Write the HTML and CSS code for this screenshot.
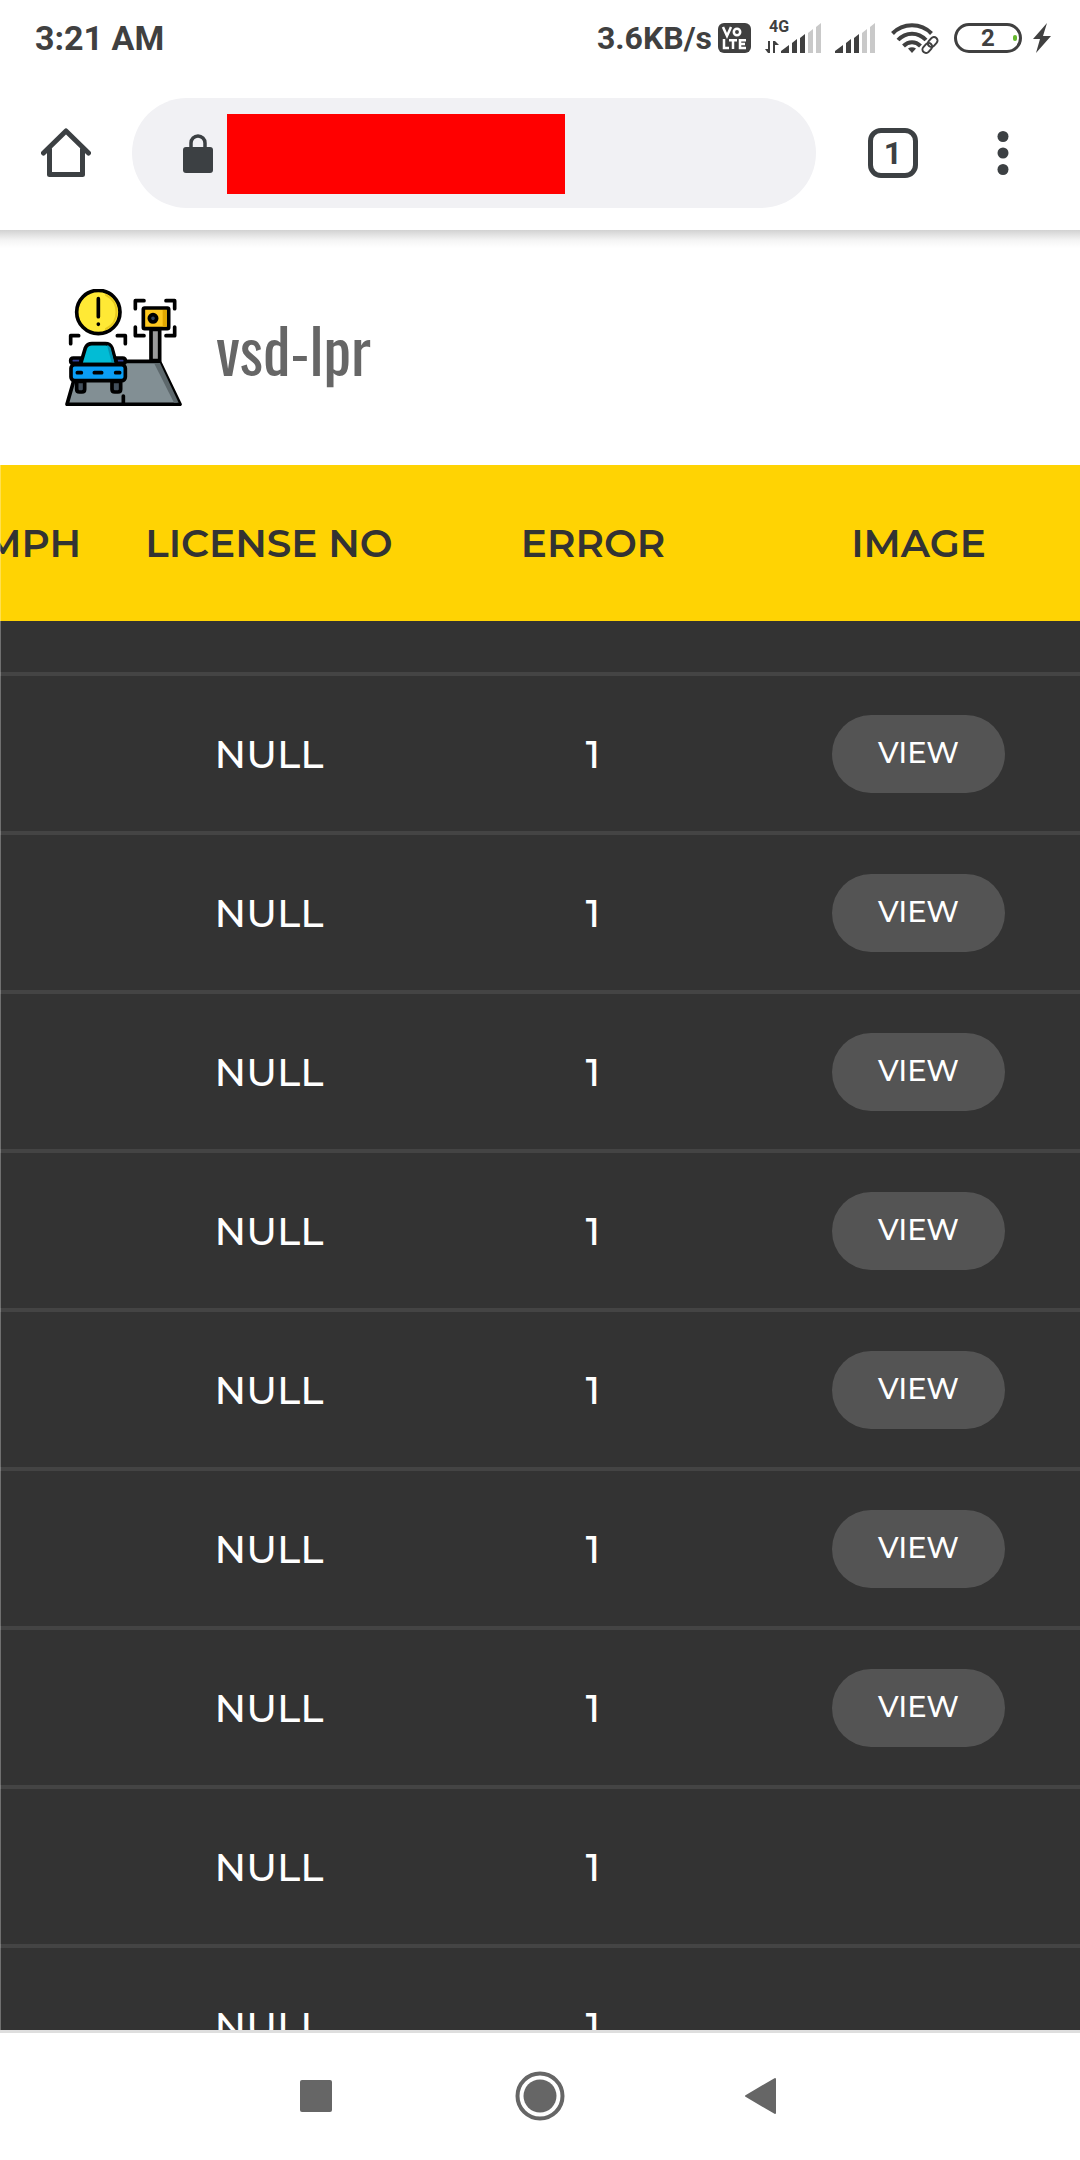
FILE: index.html
```html
<!DOCTYPE html>
<html lang="en">
<head>
<meta charset="utf-8">
<meta name="viewport" content="width=device-width, initial-scale=1">
<title>vsd-lpr</title>
<link rel="stylesheet" href="styles.css">
</head>
<body>
<div class="status">
  <span class="status-time">3:21 AM</span>
  <div class="status-side">
    <span class="status-speed">3.6KB/s</span>
    <svg class="icon-volte" width="33" height="30" viewBox="0 0 33 30" fill="none" stroke="#fff" stroke-width="2.5">
      <rect width="33" height="30" rx="6" fill="#404040" stroke="none"/>
      <path d="M5 4l4 9 4-9"/><circle cx="19" cy="9" r="3.2"/>
      <path d="M6 16v9h5M11 17.200h8M15 17v9M28 17.200h-6v7.800h6M22 21h5"/>
    </svg>
    <svg class="icon-signal" width="57" height="46" viewBox="0 -6 57 46" fill="#404040">
      <text class="network" x="4" y="11">4G</text>
      <path d="M3 20h2v12H3zM0 28h3v4zM8 20h2v12H8zM10 20l4 4h-4z"/>
      <path d="M16 32v-2l8-6v8zM27 32V22l5-4v14zM35 32V17l5-4v19z"/>
      <path fill="#c9c9c9" d="M43 32V12l5-4v24zM51 32V6l5-4v30z"/>
    </svg>
    <svg class="icon-signal2" width="42" height="34" viewBox="0 0 42 34" fill="#404040">
      <path d="M0 32v-2l8-6v8zM11 32V22l5-4v14zM19 32V17l5-4v19z"/>
      <path fill="#c9c9c9" d="M27 32V12l5-4v24zM35 32V6l5-4v30z"/>
    </svg>
    <svg class="icon-wifi" width="48" height="32" viewBox="0 0 48 32" fill="none" stroke="#404040">
      <path stroke-width="4" d="M1.500 11.500C12 .5 30 .5 40.500 11.500M7 18c8-8.500 20-8.500 28 0M12.500 24c5-5 12-5 17 0"/>
      <path fill="#404040" stroke="none" d="M17 26.500q4-2.500 8 0l-4 4.500z"/>
      <g transform="rotate(-48 39 23)" stroke-width="2"><rect x="29.500" y="19.500" width="11" height="7" rx="3.500"/><rect x="37.500" y="19.500" width="11" height="7" rx="3.500"/></g>
    </svg>
    <svg class="icon-battery" width="68" height="30" viewBox="0 0 68 30">
      <rect x="1.500" y="1.500" width="65" height="27" rx="13.500" fill="none" stroke="#404040" stroke-width="3"/>
      <text class="charge" x="34" y="23" text-anchor="middle">2</text>
      <rect x="59" y="12" width="4" height="6" rx="2" fill="#66b82e"/>
    </svg>
    <svg class="icon-bolt" width="20" height="30" viewBox="0 0 20 30" fill="#404040"><path d="M15 0L1 16h7L4 30l15-17h-8z"/></svg>
  </div>
</div>

<div class="toolbar">
  <button class="tool" type="button" aria-label="Home">
    <svg width="50" height="50" viewBox="0 0 50 50" fill="none" stroke="#3c4043" stroke-width="5" stroke-linecap="round" stroke-linejoin="round"><path d="M2.500 25L25 3l22.500 22M8.500 21v25.500h33V21"/></svg>
  </button>
  <div class="address">
    <svg width="30" height="40" viewBox="0 0 30 40"><rect y="13" width="30" height="26" rx="3" fill="#3c4043"/><path d="M8 15V9a7 7 0 0 1 14 0v6" fill="none" stroke="#3c4043" stroke-width="3.500"/></svg>
    <input class="url" type="text" aria-label="Address" readonly>
  </div>
  <button class="tool tabs" type="button" aria-label="Open tabs"><span class="tab-count">1</span></button>
  <button class="tool menu" type="button" aria-label="Menu">
    <svg width="12" height="46" viewBox="0 0 12 46" fill="#3c4043"><circle cx="6" cy="6.500" r="5.500"/><circle cx="6" cy="23" r="5.500"/><circle cx="6" cy="39.500" r="5.500"/></svg>
  </button>
</div>

<header class="site">
  <svg class="logo" width="117" height="117" viewBox="45 57 351 351" stroke="#000" stroke-width="11" stroke-linejoin="round" stroke-linecap="round">
    <path fill="#828f94" d="M88 274h240l62 129H51z"/>
    <path fill="#5d686c" stroke="none" d="M312 279h18l56 119h-14z"/>
    <path fill="none" d="M220 403v-25"/>
    <path fill="#9a9a9a" d="M303 178h26v94h-26z"/>
    <rect x="280" y="114" width="76" height="62" rx="4" fill="#ffc91f"/>
    <path d="M338 120h12v50h-12z" fill="#e3a800" stroke="none"/>
    <circle cx="309" cy="145" r="11" fill="#35455a"/>
    <path fill="none" d="M282 92h-26v24M348 92h26v24M282 197h-26v-26M348 197h26v-26M86 197H62v24M202 197h24v24"/>
    <circle cx="145" cy="126" r="65" fill="#ffe935"/>
    <path fill="none" stroke="#e8c81e" stroke-width="6" d="M168 75a57 57 0 0 1 0 102"/>
    <path fill="none" d="M145 86v54M145 162v1"/>
    <path fill="#43505c" d="M80 334h24v24q0 8-8 8h-8q-8 0-8-8zM186 334h26v24q0 8-8 8h-10q-8 0-8-8z"/>
    <path fill="#33429b" d="M92 280H70q-8 0-8-8t8-8h24zM200 280h18q8 0 8-8t-8-8h-22z"/>
    <path fill="#02bcd5" d="M91 284l15-50q6-13 20-13h40q14 0 20 13l14 50z"/>
    <path fill="#0792b0" stroke="none" d="M171 226q9 1 12 12l11 43h-8z"/>
    <rect x="63" y="284" width="163" height="48" rx="11" fill="#0a9ef5"/>
    <path fill="none" d="M82 308h12M133 308h22M197 308h12"/>
  </svg>
  <h1 class="brand">vsd-lpr</h1>
</header>

<main class="scroller">
  <table class="log">
    <colgroup><col><col class="col-license"><col class="col-error"><col class="col-image"></colgroup>
    <thead>
      <tr><th class="mph">MPH</th><th>LICENSE NO</th><th>ERROR</th><th>IMAGE</th></tr>
    </thead>
    <tbody>
      <tr class="partial"><td></td><td></td><td></td><td></td></tr>
      <tr><td></td><td>NULL</td><td>1</td><td><button class="view" type="button">VIEW</button></td></tr>
      <tr><td></td><td>NULL</td><td>1</td><td><button class="view" type="button">VIEW</button></td></tr>
      <tr><td></td><td>NULL</td><td>1</td><td><button class="view" type="button">VIEW</button></td></tr>
      <tr><td></td><td>NULL</td><td>1</td><td><button class="view" type="button">VIEW</button></td></tr>
      <tr><td></td><td>NULL</td><td>1</td><td><button class="view" type="button">VIEW</button></td></tr>
      <tr><td></td><td>NULL</td><td>1</td><td><button class="view" type="button">VIEW</button></td></tr>
      <tr><td></td><td>NULL</td><td>1</td><td><button class="view" type="button">VIEW</button></td></tr>
      <tr><td></td><td>NULL</td><td>1</td><td></td></tr>
      <tr><td></td><td>NULL</td><td>1</td><td></td></tr>
    </tbody>
  </table>
</main>

<nav class="system" aria-label="System">
  <button class="key" type="button" aria-label="Recent apps"><svg width="32" height="32" viewBox="0 0 32 32"><rect width="32" height="32" rx="2" fill="#666"/></svg></button>
  <button class="key" type="button" aria-label="Home screen"><svg width="50" height="50" viewBox="0 0 50 50"><circle cx="25" cy="25" r="22.500" fill="none" stroke="#666" stroke-width="4"/><circle cx="25" cy="25" r="16.500" fill="#666"/></svg></button>
  <button class="key" type="button" aria-label="Back"><svg width="38" height="38" viewBox="0 0 38 38"><path d="M1 19L30 2v34z" fill="#666" stroke="#666" stroke-width="2" stroke-linejoin="round"/></svg></button>
</nav>
</body>
</html>
```

FILE: styles.css
```css
* { box-sizing: border-box; }

body {
  margin: 0;
  height: 100vh;
  display: flex;
  flex-direction: column;
  overflow: hidden;
  background: #fff;
  font-family: Montserrat, Inter, "Open Sans", sans-serif;
}

svg { display: block; flex: none; }

button {
  margin: 0;
  padding: 0;
  border: 0;
  background: none;
  font: inherit;
  cursor: pointer;
}

/* Phone status bar */
.status {
  flex: none;
  height: 76px;
  padding: 0 28px 0 35px;
  display: flex;
  align-items: center;
  justify-content: space-between;
  color: #404040;
  font: 700 34px/40px Roboto, sans-serif;
}
.status-side { display: flex; align-items: center; }
.status-speed { font-size: 32px; }
.icon-volte { margin-left: 6px; }
.icon-signal { margin-left: 14px; }
.icon-signal2 { margin-left: 13px; }
.icon-wifi { margin-left: 14px; }
.icon-battery { margin-left: 15px; }
.icon-bolt { margin-left: 10px; }
.network { font: 700 16px Roboto, sans-serif; }
.charge { font: 700 24px Roboto, sans-serif; fill: #404040; }

/* Browser toolbar */
.toolbar {
  flex: none;
  height: 154px;
  display: flex;
  align-items: center;
}
.tool {
  width: 132px;
  height: 110px;
  display: flex;
  align-items: center;
  justify-content: center;
}
.tabs { width: 110px; margin-left: 22px; }
.menu { padding-right: 22px; }
.address {
  flex: 1;
  height: 110px;
  padding: 2px 0 0 51px;
  display: flex;
  align-items: center;
  gap: 14px;
  border-radius: 55px;
  background: #f1f1f4;
}
.url {
  width: 338px;
  height: 80px;
  padding: 0;
  border: 0;
  background: #f00;
}
.tab-count {
  width: 50px;
  height: 50px;
  border: 5px solid #3c4043;
  border-radius: 13px;
  color: #3c4043;
  font: 700 32px/40px Roboto, sans-serif;
}

/* Page header */
.site {
  flex: none;
  height: 235px;
  padding: 0 65px;
  display: flex;
  align-items: center;
  gap: 34px;
  background: linear-gradient(#d2d2d2, #f4f4f4 10px, #fff 18px);
}
.brand {
  margin: 0;
  color: #666;
  font: 400 62px/80px Oswald, "Liberation Sans Narrow", "Liberation Sans", sans-serif;
}

/* Log table, scrolled to its right-hand columns */
.scroller {
  flex: 1;
  min-height: 0;
  position: relative;
  display: flex;
  justify-content: flex-end;
  overflow: hidden;
  background: #333;
}
.scroller::before {
  content: "";
  position: absolute;
  inset: 0 auto 0 0;
  width: 1px;
  background: rgba(255, 255, 255, 0.3);
}
.log {
  flex: none;
  width: 100%;
  align-self: flex-start;
  table-layout: fixed;
  border-collapse: separate;
  border-spacing: 0;
  color: #fff;
  font-size: 39px;
  font-weight: 500;
  line-height: 48px;
  text-align: center;
}
.col-license { width: 312px; }
.col-error { width: 336px; }
.col-image { width: 319px; }
.log th {
  height: 156px;
  padding: 0;
  background: #ffd303;
  color: #333;
  font-weight: 600;
  white-space: nowrap;
}
.log .mph {
  display: flex;
  align-items: center;
  justify-content: flex-end;
  padding-right: 32px;
}
.log td {
  height: 159px;
  padding: 0;
  border-bottom: 4px solid #444;
}
.log th:last-child,
.log td:last-child { padding-right: 4px; }
.log .partial td { height: 55px; }
.view {
  display: block;
  width: 173px;
  height: 78px;
  margin: 0 auto;
  padding-bottom: 2px;
  border-radius: 39px;
  background: #545454;
  color: #fff;
  font-size: 29px;
  line-height: 36px;
}

/* Android navigation keys */
.system {
  flex: none;
  height: 130px;
  padding-bottom: 2px;
  display: flex;
  justify-content: center;
  border-top: 3px solid #dedede;
  background: #fff;
}
.key {
  width: 224px;
  display: flex;
  align-items: center;
  justify-content: center;
}
```
